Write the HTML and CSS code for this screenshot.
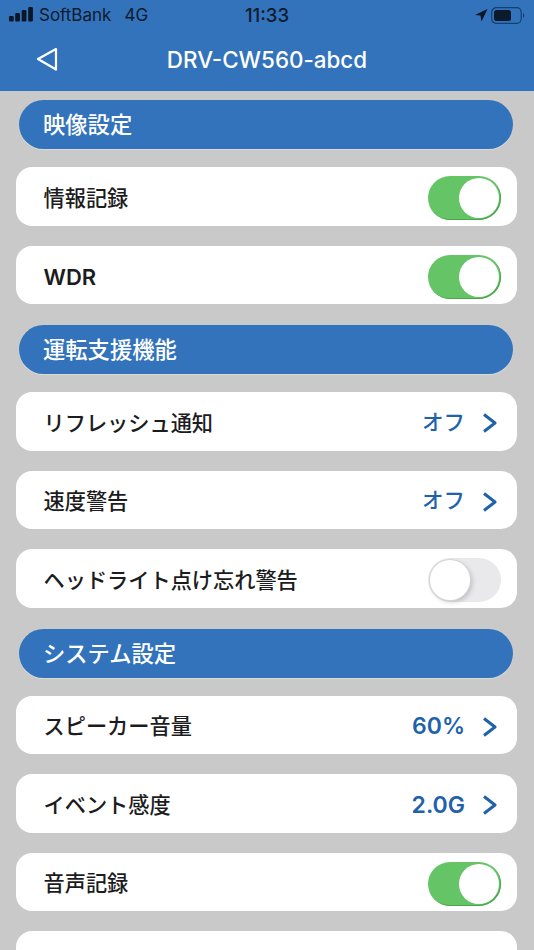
FILE: index.html
```html
<!DOCTYPE html>
<html lang="ja">
<head>
<meta charset="utf-8">
<title>DRV-CW560-abcd</title>
<link rel="stylesheet" href="styles.css">
</head>
<body>
<div class="screen">
  <header class="header">
    <div class="status">
      <div class="status-left">
        <svg class="signal" width="24" height="16" viewBox="0 0 24 16"><rect x="0" y="9" width="4.700" height="5.500" rx="1"/><rect x="6.200" y="6" width="4.700" height="8.500" rx="1"/><rect x="12.700" y="3" width="4.700" height="11.500" rx="1"/><rect x="19.200" y="0" width="4.700" height="14.500" rx="1"/></svg>
        <span class="carrier">SoftBank</span>
        <span class="net">4G</span>
      </div>
      <div class="clock">11:33</div>
      <div class="status-right">
        <svg class="loc" width="14" height="14" viewBox="0 0 14 14"><path d="M13.500 1 L1 7 L6.500 7.500 L7.500 13.500 Z"/></svg>
        <svg class="battery" width="34" height="17" viewBox="0 0 34 17"><rect x="0.700" y="0.700" width="29.500" height="15.600" rx="4.500" fill="none" stroke="#12406f" stroke-width="1.200"/><rect x="3" y="3" width="17" height="11" rx="2.500" fill="#0c1a2c"/><path d="M32 6 a3 3 0 0 1 0 5 z" fill="#12406f"/></svg>
      </div>
    </div>
    <div class="nav">
      <svg class="back" width="22" height="24" viewBox="0 0 22 24"><path d="M20 2 L2 12 L20 22.500 Z" fill="none" stroke="#fff" stroke-width="2.200" stroke-linejoin="round"/></svg>
      <div class="title">DRV-CW560-abcd</div>
    </div>
  </header>
  <main class="list">
    <h2 class="section first">映像設定</h2>
    <div class="card"><span class="label">情報記録</span><span class="toggle on"><i class="knob"></i></span></div>
    <div class="card"><span class="label latin">WDR</span><span class="toggle on"><i class="knob"></i></span></div>
    <h2 class="section">運転支援機能</h2>
    <div class="card"><span class="label">リフレッシュ通知</span><span class="value">オフ</span><svg class="chev" width="15" height="20" viewBox="0 0 15 20"><path d="M2 1.500 L13 10 L2 18.500" /></svg></div>
    <div class="card"><span class="label">速度警告</span><span class="value">オフ</span><svg class="chev" width="15" height="20" viewBox="0 0 15 20"><path d="M2 1.500 L13 10 L2 18.500" /></svg></div>
    <div class="card"><span class="label">ヘッドライト点け忘れ警告</span><span class="toggle off"><i class="knob"></i></span></div>
    <h2 class="section">システム設定</h2>
    <div class="card"><span class="label">スピーカー音量</span><span class="value num">60%</span><svg class="chev" width="15" height="20" viewBox="0 0 15 20"><path d="M2 1.500 L13 10 L2 18.500" /></svg></div>
    <div class="card"><span class="label">イベント感度</span><span class="value num">2.0G</span><svg class="chev" width="15" height="20" viewBox="0 0 15 20"><path d="M2 1.500 L13 10 L2 18.500" /></svg></div>
    <div class="card"><span class="label">音声記録</span><span class="toggle on"><i class="knob"></i></span></div>
    <div class="card"></div>
  </main>
</div>
</body>
</html>
```
FILE: styles.css
```css
* { box-sizing: border-box; }
html, body { margin: 0; padding: 0; }
body { width: 534px; height: 950px; overflow: hidden; background: #c9c9c9; font-family: "Liberation Sans", "Noto Sans CJK JP", sans-serif; }
.screen { height: 950px; overflow: hidden; display: flex; flex-direction: column; }
.header { height: 91px; flex: none; background: #3373bb; }
.status { height: 30px; padding: 0 9px; display: grid; grid-template-columns: 1fr auto 1fr; align-items: center; color: #0d1b2e; font-family: Inter, sans-serif; }
.status-left { display: flex; align-items: center; font-size: 17px; }
.signal { fill: #0b1626; margin-right: 6px; }
.net { margin-left: 13px; }
.clock { font-size: 18.500px; font-weight: 500; }
.status-right { display: flex; justify-content: flex-end; align-items: center; gap: 3px; }
.loc { fill: #0b1626; }
.nav { position: relative; height: 61px; display: flex; align-items: center; justify-content: center; padding-bottom: 2px; }
.back { position: absolute; left: 36px; top: 17px; }
.title { color: #fff; font-size: 22.400px; font-weight: 500; font-family: Inter, sans-serif; }
.list { flex: 1; padding: 0 17px 0 16px; display: flex; flex-direction: column; }
.section { flex: none; margin: 1px 4px 18px 3px; height: 49px; border-radius: 25px; background: #3373bb; color: #fff; font-size: 22.300px; font-weight: 500; line-height: 51px; padding-left: 24px; box-shadow: 0 1px 1px rgba(255,255,255,0.35); }
.section.first { margin-top: 9px; }
.card { flex: none; height: 58.500px; margin-bottom: 20px; background: #fff; border-radius: 16px; display: flex; align-items: center; padding: 0 16px 0 27.500px; }
.label { flex: 1; font-size: 21.200px; font-weight: 500; color: #1c1c1e; line-height: 1; padding-top: 4px; }
.label.latin { font-family: Inter, sans-serif; font-size: 22px; font-weight: 600; }
.value { color: #1f62ab; font-size: 21.500px; font-weight: 500; margin-right: 17px; padding-top: 4px; line-height: 1; }
.value.num { font-family: Inter, sans-serif; font-size: 23px; font-weight: 600; }
.chev { flex: none; margin-right: 4px; margin-top: 4px; fill: none; stroke: #1f62ab; stroke-width: 3; stroke-linejoin: round; }
.toggle { flex: none; width: 73px; height: 44px; border-radius: 22px; position: relative; display: block; margin-top: 4px; }
.toggle.on { background: #65c466; box-shadow: inset -1px -1px 0 #4aa64d; }
.toggle.off { background: #e9e9eb; }
.knob { position: absolute; top: 2px; width: 40px; height: 40px; border-radius: 50%; background: #fff; }
.on .knob { right: 2px; }
.off .knob { left: 2px; box-shadow: 0 0 0 1px #d5d5d5, 2px 2px 5px rgba(0,0,0,0.2); }
```
